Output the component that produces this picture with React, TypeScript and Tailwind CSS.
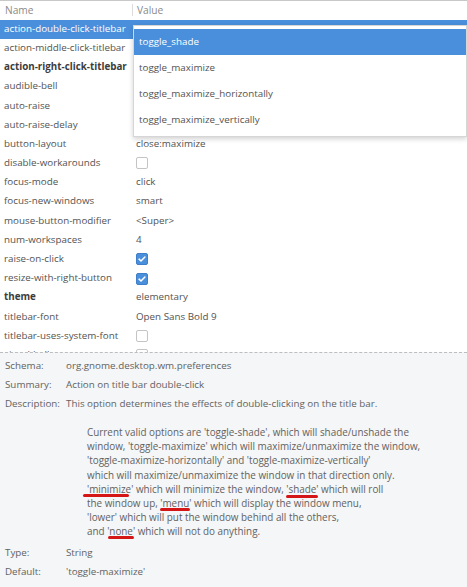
import React from 'react'

type Row = {
  name: string
  value?: string
  check?: boolean
  bold?: boolean
}

// values of the first rows sit under the open combo popup
const ROWS: Row[] = [
  { name: 'action-double-click-titlebar' },
  { name: 'action-middle-click-titlebar' },
  { name: 'action-right-click-titlebar', bold: true },
  { name: 'audible-bell' },
  { name: 'auto-raise' },
  { name: 'auto-raise-delay' },
  { name: 'button-layout', value: 'close:maximize' },
  { name: 'disable-workarounds', check: false },
  { name: 'focus-mode', value: 'click' },
  { name: 'focus-new-windows', value: 'smart' },
  { name: 'mouse-button-modifier', value: '<Super>' },
  { name: 'num-workspaces', value: '4' },
  { name: 'raise-on-click', check: true },
  { name: 'resize-with-right-button', check: true },
  { name: 'theme', value: 'elementary', bold: true },
  { name: 'titlebar-font', value: 'Open Sans Bold 9' },
  { name: 'titlebar-uses-system-font', check: false },
  { name: 'visual-bell', check: false },
]

const OPTIONS = [
  'toggle_shade',
  'toggle_maximize',
  'toggle_maximize_horizontally',
  'toggle_maximize_vertically',
]

function Checkbox({ checked }: { checked: boolean }) {
  if (checked) {
    return (
      <span className="flex h-[12px] w-[12px] items-center justify-center rounded-[2px] bg-[#4a8fdb] border border-[#3f7fc8]">
        <svg viewBox="0 0 12 12" className="h-[10px] w-[10px]">
          <path
            d="M2.5 6.2 L4.8 8.4 L9.5 3.6"
            fill="none"
            stroke="white"
            strokeWidth="1.8"
            strokeLinecap="round"
            strokeLinejoin="round"
          />
        </svg>
      </span>
    )
  }
  return (
    <span className="block h-[12px] w-[12px] rounded-[2px] border border-[#c4c4c4] bg-white" />
  )
}

function Marked({ children, className }: { children: React.ReactNode; className: string }) {
  return (
    <span className="relative">
      {children}
      <span className={`absolute h-[3px] rounded-full bg-[#d41616] ${className}`} />
    </span>
  )
}

export default function App() {
  return (
    <div
      className="flex h-[587px] w-[467px] flex-col overflow-hidden bg-white text-[9.8px] text-[#525252]"
      style={{ fontFamily: '"Open Sans", "Noto Sans", sans-serif' }}
    >
      {/* column header */}
      <div className="flex h-[19.5px] shrink-0 items-center border-t border-[#c8c8c8] text-[10.2px] text-[#8a8a8a]">
        <div className="w-[132px] pl-[5px]">Name</div>
        <div className="h-[12px] w-px bg-[#dcdcdc]" />
        <div className="pl-[4px]">Value</div>
      </div>

      {/* keys list */}
      <div className="relative h-[332px] shrink-0 overflow-hidden">
        {ROWS.map((row, i) => (
          <div
            key={row.name}
            className={`flex h-[19.2px] items-center ${i === 0 ? 'bg-[#4a8fdb] text-white' : ''}`}
          >
            <div
              className={`w-[133px] shrink-0 whitespace-nowrap pl-[4px] ${row.bold ? 'font-bold text-[#3c3c3c]' : ''}`}
            >
              {row.name}
            </div>
            <div className="pl-[3px] whitespace-nowrap">
              {row.check !== undefined ? (
                <Checkbox checked={row.check} />
              ) : (
                row.value
              )}
            </div>
          </div>
        ))}

        {/* combo popup */}
        <div className="absolute left-[133px] right-0 top-[5.5px] border border-[#d6d6d6] bg-white py-[3px] shadow-[0_2px_5px_rgba(0,0,0,0.18)]">
          {OPTIONS.map((opt, i) => (
            <div
              key={opt}
              className={`flex h-[26px] items-center pl-[5px] ${i === 0 ? 'bg-[#4a8fdb] text-white' : ''}`}
            >
              {opt}
            </div>
          ))}
        </div>
      </div>

      {/* details pane */}
      <div className="flex-1 border-t border-dashed border-[#bdbdbd] bg-[#f5f6f7] px-[5px] pt-[4px] text-[#626262]">
        <div className="flex h-[19.2px] items-center">
          <div className="w-[61px] shrink-0">Schema:</div>
          <div>org.gnome.desktop.wm.preferences</div>
        </div>
        <div className="flex h-[19.2px] items-center">
          <div className="w-[61px] shrink-0">Summary:</div>
          <div>Action on title bar double-click</div>
        </div>
        <div className="flex h-[19.2px] items-center">
          <div className="w-[61px] shrink-0">Description:</div>
          <div className="whitespace-nowrap">This option determines the effects of double-clicking on the title bar.</div>
        </div>
        <div className="whitespace-pre pl-[82px] pt-[11px] text-[9.9px] leading-[14.2px]">
          <div>Current valid options are 'toggle-shade', which will shade/unshade the</div>
          <div>window, 'toggle-maximize' which will maximize/unmaximize the window,</div>
          <div>'toggle-maximize-horizontally' and 'toggle-maximize-vertically'</div>
          <div>which will maximize/unmaximize the window in that direction only.</div>
          <div>
            <Marked className="-left-[4px] right-[4px] -bottom-[1px]">'minimize'</Marked> which will minimize the window,{' '}
            <Marked className="left-0 right-[1px] -bottom-[2px]">'shade'</Marked> which will roll
          </div>
          <div>
            the window up, <Marked className="left-0 right-[1px] -bottom-[1px]">'menu'</Marked> which will display the window menu,
          </div>
          <div>'lower' which will put the window behind all the others,</div>
          <div>
            and <Marked className="left-[1px] right-[1px] -bottom-[1px]">'none'</Marked> which will not do anything.
          </div>
        </div>
        <div className="mt-[5px] flex h-[19.2px] items-center">
          <div className="w-[61px] shrink-0">Type:</div>
          <div>String</div>
        </div>
        <div className="flex h-[19.2px] items-center">
          <div className="w-[61px] shrink-0">Default:</div>
          <div>'toggle-maximize'</div>
        </div>
      </div>
    </div>
  )
}
